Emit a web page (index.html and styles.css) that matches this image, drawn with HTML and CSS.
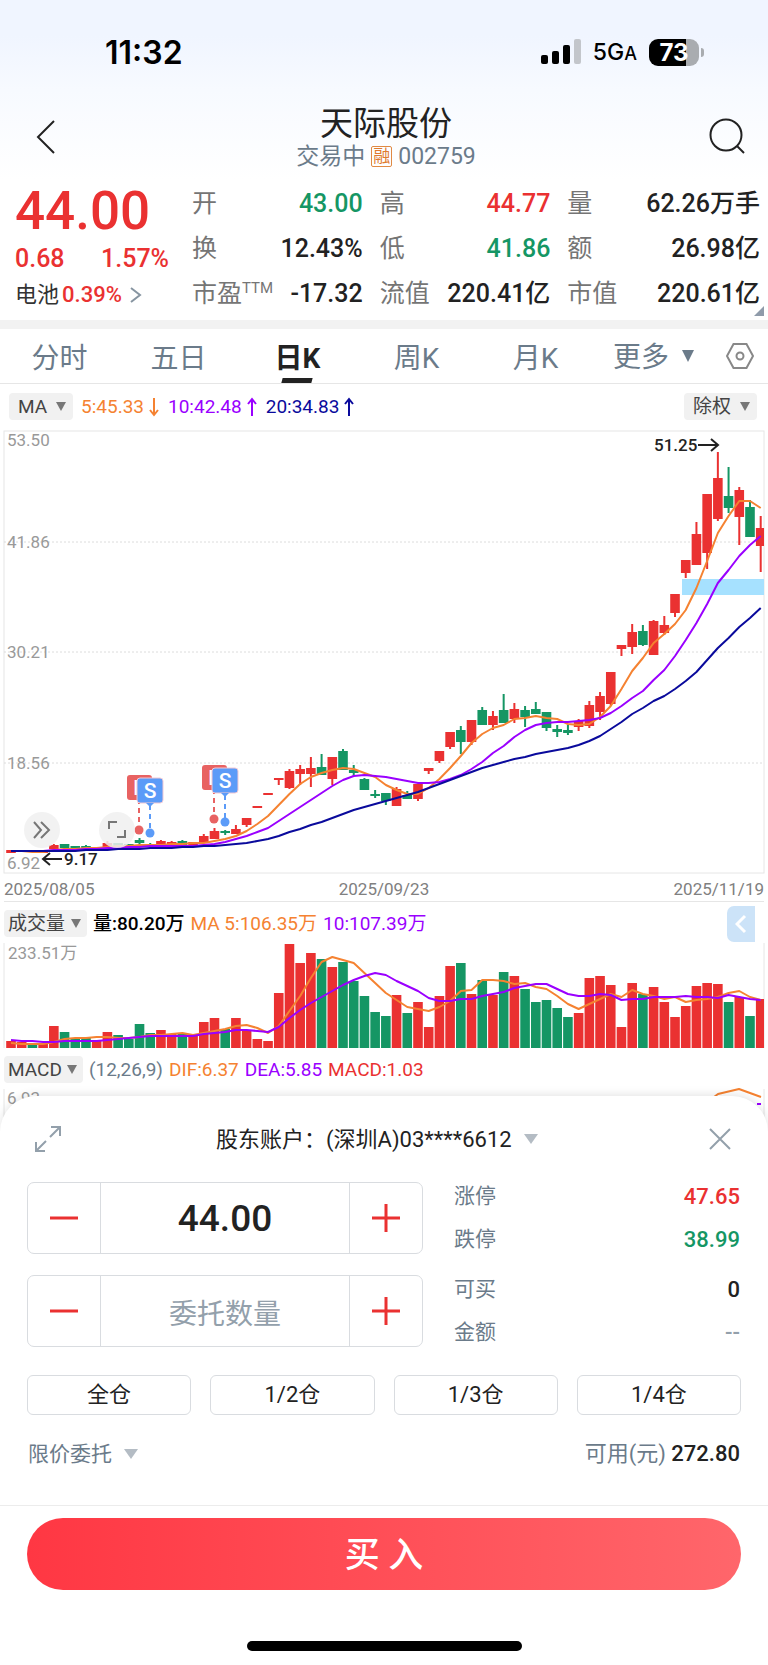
FILE: index.html
```html
<!DOCTYPE html>
<html lang="zh-CN">
<head>
    <meta charset="UTF-8" />
    <meta name="viewport" content="width=device-width, initial-scale=1.0">
    <title>天际股份 002759</title>
    <link rel="stylesheet" href="styles.css">
</head>
<body>
    <header class="top">
        <div class="status">
            <span class="time">11:32</span>
            <div class="status-right">
                <svg class="signal" width="40" height="26" viewBox="0 0 40 26">
                    <rect x="0" y="16" width="7" height="9" rx="2" />
                    <rect x="11" y="12" width="7" height="13" rx="2" />
                    <rect x="22" y="6" width="7" height="19" rx="2" />
                    <rect x="33" y="0" width="7" height="25" rx="2" fill="#c3c6cb" />
                </svg>
                <span class="network">5G<small>A</small></span>
                <span class="battery">73</span>
            </div>
        </div>
        <nav class="nav">
            <button class="icon-button" aria-label="返回">
                <svg width="20" height="36" viewBox="0 0 20 36"><path d="M18 2 L2 18 L18 34" /></svg>
            </button>
            <div class="title">
                <h1>天际股份</h1>
                <p>交易中 <span class="tag">融</span> 002759</p>
            </div>
            <button class="icon-button" aria-label="搜索">
                <svg width="38" height="38" viewBox="0 0 38 38"><circle cx="18" cy="17" r="15.500" /><path d="M29 28 L36 35" /></svg>
            </button>
        </nav>
    </header>

    <section class="quote">
        <div class="price red">
            <strong>44.00</strong>
            <p class="change"><span>0.68</span><span>1.57%</span></p>
            <a class="sector" href="#">电池<span class="red">0.39%</span>
                <svg width="12" height="18" viewBox="0 0 12 18"><path d="M1 2 L10 9 L1 16" /></svg>
            </a>
        </div>
        <dl class="stats">
            <div><dt>开</dt><dd class="green">43.00</dd></div>
            <div><dt>高</dt><dd class="red">44.77</dd></div>
            <div><dt>量</dt><dd>62.26万手</dd></div>
            <div><dt>换</dt><dd>12.43%</dd></div>
            <div><dt>低</dt><dd class="green">41.86</dd></div>
            <div><dt>额</dt><dd>26.98亿</dd></div>
            <div><dt>市盈<sup>TTM</sup></dt><dd>-17.32</dd></div>
            <div><dt>流值</dt><dd>220.41亿</dd></div>
            <div><dt>市值</dt><dd>220.61亿</dd></div>
        </dl>
        <span class="corner"></span>
    </section>

    <nav class="tabs">
        <button>分时</button>
        <button>五日</button>
        <button class="active">日K</button>
        <button>周K</button>
        <button>月K</button>
        <label class="picker"><select aria-label="更多周期"><option>更多</option></select><i class="caret"></i></label>
        <button aria-label="设置">
            <svg width="28" height="26" viewBox="0 0 28 26"><path d="M7.500 1 H20.500 L27 13 L20.500 25 H7.500 L1 13 Z" /><circle cx="14" cy="13" r="3.500" /></svg>
        </button>
    </nav>

    <div class="legend legend-main">
        <label class="picker chip"><select aria-label="主图指标"><option>MA</option></select><i class="caret"></i></label>
        <span class="orange">5:45.33<svg width="12" height="20" viewBox="0 0 12 20"><path d="M6 1 V18 M2 13 L6 18 L10 13" /></svg></span>
        <span class="purple">10:42.48<svg width="12" height="20" viewBox="0 0 12 20"><path d="M6 19 V2 M2 7 L6 2 L10 7" /></svg></span>
        <span class="navy">20:34.83<svg width="12" height="20" viewBox="0 0 12 20"><path d="M6 19 V2 M2 7 L6 2 L10 7" /></svg></span>
        <label class="picker chip right"><select aria-label="复权"><option>除权</option></select><i class="caret"></i></label>
    </div>

    <div class="chart">
        <svg id="kline" viewBox="0 0 768 443">
            <rect class="frame" x="4" y="1" width="760" height="442" />
            <path class="grid" d="M4 112 H764 M4 222 H764 M4 333 H764" />
            <rect x="682" y="149" width="82" height="16" fill="#a6e1ff" />
            <g id="candles"></g>
            <g id="averages"></g>
            <g class="axis">
                <text x="7" y="16">53.50</text>
                <text x="7" y="118">41.86</text>
                <text x="7" y="228">30.21</text>
                <text x="7" y="339">18.56</text>
                <text x="7" y="439">6.92</text>
            </g>
            <g class="peak">
                <text x="654" y="21">51.25</text>
                <path d="M698 15 H717 M711 9 L718 15 L711 21" />
                <text x="64" y="435">9.17</text>
                <path d="M62 429 H43 M50 423 L43 429 L50 435" />
            </g>
            <g id="trades"></g>
        </svg>
        <button class="round forward" aria-label="前进">
            <svg width="20" height="18" viewBox="0 0 20 18"><path d="M2 1 L9 9 L2 17 M9 1 L17 9 L9 17" /></svg>
        </button>
        <button class="round enlarge" aria-label="全屏">
            <svg width="18" height="18" viewBox="0 0 18 18"><path d="M1 8 V1 H9 M17 9 V16 H9" /></svg>
        </button>
    </div>
    <div class="dates">
        <span>2025/08/05</span>
        <span>2025/09/23</span>
        <span>2025/11/19</span>
    </div>

    <div class="legend">
        <label class="picker chip"><select aria-label="副图指标"><option>成交量</option></select><i class="caret"></i></label>
        <span class="black">量:80.20万</span>
        <span class="orange">MA 5:106.35万</span>
        <span class="purple">10:107.39万</span>
        <button class="drawer" aria-label="展开">
            <svg width="12" height="20" viewBox="0 0 12 20"><path d="M10 2 L2 10 L10 18" /></svg>
        </button>
    </div>
    <svg id="volume" viewBox="0 0 768 105">
        <path class="frame" d="M4 0 V105 M764 0 V105" />
        <g id="bars"></g>
        <g id="volumeAverages"></g>
        <g class="axis"><text x="8" y="16">233.51万</text></g>
    </svg>

    <div class="legend">
        <label class="picker chip"><select aria-label="副图指标二"><option>MACD</option></select><i class="caret"></i></label>
        <span class="slate">(12,26,9)</span>
        <span class="orange">DIF:6.37</span>
        <span class="purple">DEA:5.85</span>
        <span class="red">MACD:1.03</span>
    </div>
    <svg id="macd" viewBox="0 0 768 40">
        <path class="frame" d="M4 0 V40 M764 0 V40" />
        <path class="line" stroke="#f58231" d="M714 8 L718 5 L739 0 L750 4 L761 8" />
        <path class="line" stroke="#9a00ff" d="M757 15 H761" />
        <g class="axis"><text x="7" y="15">6.93</text></g>
    </svg>

    <form class="sheet">
        <div class="sheet-head">
            <button type="button" aria-label="放大">
                <svg width="26" height="26" viewBox="0 0 26 26"><path d="M15 11 L25 1 M16 1 H25 V10 M11 15 L1 25 M1 16 V25 H10" /></svg>
            </button>
            <label class="picker"><select aria-label="股东账户"><option>股东账户：(深圳A)03****6612</option></select><i class="caret"></i></label>
            <button type="button" aria-label="关闭">
                <svg width="22" height="22" viewBox="0 0 22 22"><path d="M1 1 L21 21 M21 1 L1 21" /></svg>
            </button>
        </div>

        <div class="order">
            <div class="stepper">
                <button type="button" aria-label="减价"><svg width="30" height="30" viewBox="0 0 30 30"><path d="M1 15 H29" /></svg></button>
                <input type="text" aria-label="委托价格" value="44.00">
                <button type="button" aria-label="加价"><svg width="30" height="30" viewBox="0 0 30 30"><path d="M1 15 H29 M15 1 V29" /></svg></button>
            </div>
            <dl class="limits">
                <div><dt>涨停</dt><dd class="red">47.65</dd></div>
                <div><dt>跌停</dt><dd class="green">38.99</dd></div>
            </dl>
            <div class="stepper">
                <button type="button" aria-label="减量"><svg width="30" height="30" viewBox="0 0 30 30"><path d="M1 15 H29" /></svg></button>
                <input type="text" aria-label="委托数量" placeholder="委托数量">
                <button type="button" aria-label="加量"><svg width="30" height="30" viewBox="0 0 30 30"><path d="M1 15 H29 M15 1 V29" /></svg></button>
            </div>
            <dl class="limits">
                <div><dt>可买</dt><dd>0</dd></div>
                <div><dt>金额</dt><dd class="muted">--</dd></div>
            </dl>
        </div>

        <div class="portions">
            <button type="button">全仓</button>
            <button type="button">1/2仓</button>
            <button type="button">1/3仓</button>
            <button type="button">1/4仓</button>
        </div>

        <div class="funds">
            <label class="picker"><select aria-label="委托方式"><option>限价委托</option></select><i class="caret"></i></label>
            <p>可用(元) <b>272.80</b></p>
        </div>

        <div class="submit">
            <button type="submit">买 入</button>
        </div>
        <div class="home"></div>
    </form>

    <script src="script.js"></script>
</body>
</html>
```

FILE: styles.css
```css
* {
    box-sizing: border-box;
}

body {
    margin: 0;
    background-color: white;
    color: #222;
    font-family: Roboto, "Noto Sans CJK SC", sans-serif;
}

h1, p, dl, dd {
    margin: 0;
}

button, input, select {
    font-family: inherit;
    color: inherit;
    background: none;
    border: none;
    padding: 0;
    margin: 0;
}

button {
    cursor: pointer;
}

svg {
    fill: none;
    stroke-width: 2;
}

.red { color: #ea3131; }
.green { color: #159664; }
.orange { color: #f58231; }
.purple { color: #9a00ff; }
.navy { color: #0a0a9c; }
.black { color: black; }
.slate { color: #6b7b8a; }

/* Cabecera */
.top {
    background: linear-gradient(#f0f5ff 20%, #f7faff 50%, white);
}

.status {
    display: flex;
    justify-content: space-between;
    align-items: center;
    height: 90px;
    padding: 14px 69px 0 105px;
    color: black;
    font-family: Inter, sans-serif;
}

.time {
    font-size: 32px;
    font-weight: 600;
}

.status-right {
    display: flex;
    align-items: center;
    gap: 12px;
}

.signal {
    fill: black;
}

.network {
    font-size: 23px;
    font-weight: 500;
}

.network small {
    font-size: 18px;
}

.battery {
    position: relative;
    width: 50px;
    height: 27px;
    border-radius: 9px;
    background: linear-gradient(90deg, black 74%, #a9acb0 74%);
    color: white;
    font-size: 24px;
    font-weight: 700;
    line-height: 27px;
    text-align: center;
}

.battery::after {
    content: "";
    position: absolute;
    right: -5px;
    top: 9px;
    width: 3px;
    height: 9px;
    border-radius: 0 4px 4px 0;
    background-color: #a9acb0;
}

.nav {
    display: grid;
    grid-template-columns: 1fr auto 1fr;
    align-items: center;
    height: 90px;
    padding: 4px 22px 0 26px;
}

.icon-button {
    display: flex;
    width: 38px;
    padding-left: 10px;
}

.icon-button:last-child {
    justify-self: end;
    padding: 0;
}

.icon-button svg {
    stroke: #222;
}

.title {
    text-align: center;
}

.title h1 {
    font-size: 33px;
    font-weight: 400;
    line-height: 38px;
}

.title p {
    display: flex;
    align-items: center;
    justify-content: center;
    gap: 6px;
    color: #6b7b8a;
    font-size: 23px;
    line-height: 27px;
}

.tag {
    width: 21px;
    height: 21px;
    border: 1px solid #e08a45;
    border-radius: 2px;
    color: #e07a2d;
    font-size: 17px;
    line-height: 19px;
    text-align: center;
}

/* Cotización */
.quote {
    display: flex;
    position: relative;
    height: 149px;
    padding: 1px 8px 0 15px;
    border-bottom: 9px solid #f2f2f2;
}

.price {
    width: 177px;
    font-weight: 500;
}

.price strong {
    display: block;
    font-size: 53px;
    font-weight: 500;
    line-height: 60px;
}

.change {
    display: flex;
    justify-content: space-between;
    width: 154px;
    font-size: 25px;
    line-height: 36px;
}

.sector {
    display: flex;
    align-items: center;
    color: #333;
    font-size: 22px;
    font-weight: 400;
    line-height: 36px;
    text-decoration: none;
}

.sector span {
    margin: 0 8px 0 3px;
    font-weight: 500;
}

.sector svg {
    stroke: #8795a1;
}

.stats {
    flex: 1;
    display: grid;
    grid-template-columns: 171fr 171fr 193fr;
    grid-auto-rows: 45px;
    column-gap: 17px;
    font-size: 25px;
    line-height: 45px;
}

.stats div, .limits div {
    display: flex;
    justify-content: space-between;
}

.stats dt {
    color: #757575;
}

.stats dd {
    font-weight: 500;
}

.stats sup {
    font-size: 15px;
    line-height: 0;
    vertical-align: 9px;
}

.corner {
    position: absolute;
    right: 4px;
    bottom: 4px;
    border-left: 10px solid transparent;
    border-bottom: 10px solid #8f9baa;
}

/* Pestañas */
.tabs {
    display: grid;
    grid-template-columns: repeat(5, 119fr) 117fr 56fr;
    align-items: center;
    height: 55px;
    border-bottom: 1px solid #e6e6e6;
    color: #6b7b8a;
    font-size: 28px;
}

.tabs button, .tabs select {
    height: 54px;
    font-size: 28px;
}

.tabs .picker {
    justify-content: center;
}

.tabs select {
    padding-top: 3px;
}

.tabs .active {
    position: relative;
    color: #222;
    font-weight: 700;
}

.active::after {
    content: "";
    position: absolute;
    left: 44px;
    bottom: 0;
    width: 30px;
    height: 5px;
    background-color: #222;
    transform: skewX(-15deg);
}

.tabs svg {
    display: block;
    margin: 0 auto;
    stroke: #888;
}

.picker {
    display: flex;
    align-items: center;
    gap: 8px;
}

.picker select {
    appearance: none;
    text-overflow: clip;
}

.caret {
    border: 5px solid transparent;
    border-top: 10px solid currentColor;
    border-bottom: none;
}

.tabs .caret {
    margin-left: 4px;
    border-width: 12px 6px 0;
}

/* Leyendas */
.legend {
    display: flex;
    align-items: center;
    gap: 6px;
    height: 41px;
    padding: 2px 4px 0;
    font-size: 19px;
    line-height: 22px;
}

.legend-main {
    height: 46px;
    gap: 8px;
    padding: 0 11px 1px 9px;
}

.legend span {
    display: flex;
    align-items: center;
    gap: 4px;
}

.legend .black {
    font-weight: 500;
}

.legend span svg {
    stroke: currentColor;
}

.chip {
    height: 27px;
    padding: 0 6px 0 4px;
    gap: 5px;
    border-radius: 4px;
    background-color: #f1f1f1;
    color: #444;
}

.legend-main .chip {
    padding: 0 7px 0 9px;
    gap: 8px;
}

.chip select {
    font-size: 19px;
}

.chip .caret {
    border-width: 9px 5px 0;
    color: #777;
}

.legend .right {
    margin-left: auto;
}

.drawer {
    display: flex;
    align-items: center;
    justify-content: center;
    width: 28px;
    height: 36px;
    margin: 0 9px 0 auto;
    border-radius: 7px 0 0 7px;
    background-color: #cce3f8;
}

.drawer svg {
    stroke: white;
    stroke-width: 3;
}

/* Gráficos */
.chart {
    position: relative;
}

#kline, #volume, #macd {
    display: block;
    width: 100%;
    overflow: visible;
}

.frame {
    stroke: #e6e6e6;
    stroke-width: 1;
}

.grid {
    stroke: #dcdcdc;
    stroke-width: 1;
    stroke-dasharray: 2 2;
}

.line {
    stroke-width: 2;
    stroke-linejoin: round;
}

.axis {
    fill: #999;
    font-size: 17px;
}

.peak {
    fill: #222;
    stroke: none;
    font-size: 17px;
    font-weight: 500;
}

.peak path {
    fill: none;
    stroke: #222;
}

.badge {
    fill: white;
    font-size: 21px;
    font-weight: 500;
    text-anchor: middle;
}

.round {
    position: absolute;
    top: 382px;
    display: flex;
    align-items: center;
    justify-content: center;
    width: 36px;
    height: 36px;
    border-radius: 50%;
    background-color: rgba(240, 240, 240, 0.85);
}

.round svg {
    stroke: #777;
}

.forward {
    left: 24px;
}

.enlarge {
    left: 99px;
}

.dates {
    display: flex;
    justify-content: space-between;
    height: 29px;
    margin: 0 4px;
    border-bottom: 1px solid #e6e6e6;
    color: #808080;
    font-size: 17px;
    line-height: 32px;
}

/* Panel de compra */
.sheet {
    position: relative;
    margin-top: -33px;
    border-radius: 36px 36px 0 0;
    background-color: white;
    box-shadow: 0 -2px 8px rgba(0, 0, 0, 0.1);
}

.sheet-head {
    display: flex;
    justify-content: space-between;
    align-items: center;
    height: 86px;
    padding: 0 37px 0 35px;
}

.sheet-head svg {
    display: block;
    stroke: #93a0ab;
}

.sheet-head .picker {
    gap: 12px;
    margin-right: 16px;
}

.sheet-head select {
    font-size: 22px;
}

.sheet .caret {
    border-width: 10px 7px 0;
    color: #b4bcc4;
}

.order {
    display: grid;
    grid-template-columns: 396fr 286fr;
    gap: 21px 31px;
    padding: 0 28px 0 27px;
}

.stepper {
    display: grid;
    grid-template-columns: 72px 1fr 72px;
    height: 72px;
    border: 1px solid #d9dce0;
    border-radius: 7px;
}

.stepper input {
    width: 100%;
    border: 1px solid #d9dce0;
    border-width: 0 1px;
    font-size: 37px;
    font-weight: 500;
    text-align: center;
}

.stepper input::placeholder {
    color: #93a0ab;
    font-size: 28px;
    font-weight: 400;
}

.stepper svg {
    display: block;
    margin: 0 auto;
    stroke: #ea3131;
    stroke-width: 3;
}

.limits {
    display: flex;
    flex-direction: column;
    justify-content: space-between;
    font-size: 22px;
    line-height: 29px;
}

.limits dt {
    color: #6b7b8a;
    font-size: 21px;
}

.limits dd {
    font-weight: 500;
}

.limits .muted {
    color: #93a0ab;
}

.portions {
    display: grid;
    grid-template-columns: repeat(4, 1fr);
    gap: 19px;
    padding: 28px 27px 0;
}

.portions button {
    height: 40px;
    border: 1px solid #d9dce0;
    border-radius: 6px;
    font-size: 22px;
    line-height: 38px;
}

.funds {
    display: flex;
    justify-content: space-between;
    align-items: center;
    height: 91px;
    padding: 0 28px 12px;
    border-bottom: 1px solid #ececec;
    color: #6b7b8a;
    font-size: 21px;
}

.funds select {
    font-size: 21px;
}

.funds .picker {
    gap: 12px;
}

.funds p {
    font-size: 22px;
    line-height: 26px;
}

.funds b {
    color: #222;
    font-weight: 500;
}

.submit {
    padding: 12px 27px 0;
}

.submit button {
    width: 100%;
    height: 72px;
    padding-bottom: 5px;
    border-radius: 36px;
    background: linear-gradient(90deg, #ff3743, #ff666b);
    color: white;
    font-size: 35px;
    font-weight: 500;
}

.home {
    width: 275px;
    height: 10px;
    margin: 51px auto 0;
    border-radius: 5px;
    background-color: black;
}

.home::after {
    content: "";
    display: block;
    height: 24px;
}
```

FILE: script.js
```js
const RED = '#ea3131';
const GREEN = '#159664';
const ORANGE = '#f58231';
const PURPLE = '#9a00ff';
const NAVY = '#0a0a9c';

// color, body top, body bottom, high, low, volume
const days = [
    ['r', 420, 423, 420, 423, 7], ['r', 421, 422, 421, 422, 6], ['g', 421, 422, 421, 422, 3],
    ['r', 421, 423, 421, 423, 4], ['r', 415, 419, 414, 419, 22], ['g', 414, 418, 414, 419, 16],
    ['g', 416, 419, 416, 419, 10], ['g', 416, 419, 415, 419, 10], ['r', 417, 419, 417, 419, 8],
    ['r', 413, 417, 411, 417, 16], ['g', 413, 416, 413, 416, 13], ['g', 414, 417, 414, 417, 9],
    ['g', 410, 413, 408, 415, 24], ['g', 414, 416, 413, 416, 15], ['r', 411, 415, 410, 415, 18],
    ['r', 412, 414, 411, 414, 14], ['g', 411, 416, 410, 416, 14], ['r', 412, 417, 412, 417, 13],
    ['r', 406, 412, 404, 412, 26], ['r', 401, 409, 398, 409, 30], ['g', 401, 403, 400, 405, 19],
    ['r', 399, 404, 395, 404, 30], ['r', 388, 395, 388, 397, 17], ['r', 376, 378, 376, 378, 9],
    ['r', 363, 365, 363, 365, 7], ['r', 348, 350, 348, 355, 55], ['r', 341, 358, 339, 359, 104],
    ['r', 339, 344, 335, 355, 85], ['r', 338, 344, 327, 357, 95], ['g', 337, 345, 324, 345, 89],
    ['r', 327, 349, 327, 355, 81], ['g', 321, 340, 319, 340, 86], ['g', 340, 343, 335, 346, 67],
    ['g', 349, 360, 348, 360, 52], ['g', 364, 366, 360, 368, 36], ['g', 363, 371, 363, 375, 32],
    ['r', 359, 376, 357, 376, 53], ['g', 365, 369, 361, 369, 35], ['r', 354, 369, 354, 371, 46],
    ['r', 338, 341, 338, 344, 21], ['r', 321, 331, 321, 333, 52], ['r', 302, 317, 302, 319, 82],
    ['g', 300, 312, 296, 324, 85], ['r', 290, 312, 290, 315, 54], ['g', 280, 295, 277, 295, 68],
    ['r', 286, 295, 281, 300, 53], ['g', 280, 293, 264, 293, 76], ['r', 279, 289, 273, 293, 72],
    ['g', 280, 287, 276, 297, 59], ['g', 279, 284, 272, 284, 46], ['g', 282, 298, 282, 301, 48],
    ['g', 299, 302, 295, 307, 40], ['g', 300, 303, 295, 305, 31], ['r', 291, 297, 289, 301, 35],
    ['r', 275, 296, 271, 298, 70], ['r', 266, 282, 262, 290, 72], ['r', 242, 274, 242, 276, 63],
    ['r', 215, 219, 215, 226, 21], ['r', 202, 217, 194, 224, 65], ['g', 201, 215, 195, 216, 54],
    ['r', 191, 225, 190, 225, 61], ['r', 195, 203, 186, 205, 46], ['r', 164, 183, 164, 187, 31],
    ['r', 130, 143, 130, 148, 42], ['r', 104, 135, 92, 135, 62], ['r', 64, 123, 64, 139, 65],
    ['r', 48, 89, 22, 91, 64], ['g', 66, 78, 37, 83, 46], ['r', 60, 87, 57, 115, 51],
    ['g', 77, 107, 70, 107, 32], ['r', 98, 116, 86, 142, 49]
];

// moving averages of the price
const ma5 = [421, 421, 422, 422, 420, 419, 419, 418, 418, 417, 416, 416, 415, 415, 415, 414, 414, 413,
    413, 411, 409, 406, 401, 394, 386, 375, 364, 354, 347, 343, 340, 338, 339, 343, 347, 355, 360, 364,
    364, 358, 349, 338, 326, 313, 304, 298, 295, 289, 288, 286, 288, 289, 294, 295, 294, 287, 276, 259,
    241, 228, 213, 204, 194, 180, 158, 131, 103, 86, 71, 71, 78];
const ma10 = [421, 421, 421, 421, 420, 420, 420, 419, 419, 418, 418, 417, 417, 416, 416, 416, 416, 416,
    415, 414, 412, 409, 406, 402, 398, 391, 384, 377, 370, 363, 356, 350, 346, 345, 346, 347, 349, 351,
    353, 353, 352, 349, 345, 339, 332, 323, 316, 307, 300, 295, 293, 292, 292, 291, 290, 288, 283, 276,
    268, 261, 250, 240, 226, 210, 193, 174, 153, 140, 126, 115, 106];
const ma20 = [421, 421, 421, 421, 421, 421, 421, 420, 420, 420, 419, 419, 419, 418, 418, 418, 417, 417,
    416, 416, 415, 414, 413, 411, 409, 406, 402, 399, 395, 392, 388, 384, 380, 377, 374, 371, 368, 365,
    362, 358, 354, 350, 346, 342, 338, 335, 332, 329, 327, 324, 322, 320, 318, 315, 311, 306, 299, 292,
    284, 278, 271, 266, 259, 251, 242, 230, 218, 208, 197, 188, 178];

// moving averages of the volume
const vol5 = [100, 101, 101, 101, 99, 96, 95, 95, 94, 94, 95, 95, 94, 92, 92, 91, 90, 92, 90, 88, 86, 83,
    82, 85, 90, 83, 68, 53, 35, 19, 14, 17, 20, 30, 40, 50, 57, 64, 66, 68, 64, 58, 48, 47, 37, 37, 38,
    41, 40, 44, 46, 53, 61, 66, 61, 56, 51, 54, 47, 51, 53, 56, 54, 59, 57, 56, 54, 50, 48, 54, 57];
const vol10 = [97, 98, 98, 99, 99, 98, 98, 98, 98, 97, 96, 95, 94, 93, 93, 93, 93, 93, 91, 90, 89, 87,
    87, 88, 89, 84, 75, 67, 60, 54, 48, 42, 37, 33, 30, 32, 38, 43, 48, 55, 58, 58, 56, 56, 53, 51, 49,
    45, 43, 41, 41, 46, 51, 53, 53, 51, 52, 57, 56, 56, 54, 54, 54, 53, 54, 54, 55, 52, 54, 56, 57];

// buy and sell marks: x, badge y, dot y
const trades = [[139, 345, 400], [214, 335, 389]];

function xOf(i) {
    return 11 + i * 10.71;
}

function rect(x, y, width, height, color) {
    return `<rect x="${x}" y="${y}" width="${width}" height="${height}" fill="${color}" />`;
}

function line(values, color) {
    const points = values.map((y, i) => `${xOf(i)},${y}`).join(' ');
    return `<polyline class="line" points="${points}" stroke="${color}" />`;
}

function drawCandles() {
    let candles = '';
    let bars = '';
    days.forEach(([type, top, bottom, high, low, volume], i) => {
        const color = type === 'r' ? RED : GREEN;
        const x = xOf(i);
        const width = Math.min(9.6, 764 - x + 4.8);
        candles += rect(x - 1, high, 2, low - high, color);
        candles += rect(x - 4.8, top, width, bottom - top, color);
        bars += rect(x - 4.8, 105 - volume, width, volume, color);
    });
    document.getElementById('candles').innerHTML = candles;
    document.getElementById('bars').innerHTML = bars;
}

function drawTrades() {
    document.getElementById('trades').innerHTML = trades.map(([x, y, dot]) => `
        <path d="M${x} ${y + 24} V${dot}" stroke="#e86262" stroke-dasharray="5 4" />
        <path d="M${x + 11} ${y + 30} V${dot}" stroke="#5b9bf8" stroke-dasharray="5 4" />
        <circle cx="${x}" cy="${dot}" r="4.5" fill="#e86262" />
        <circle cx="${x + 11}" cy="${dot + 3}" r="4.5" fill="#5b9bf8" />
        <rect x="${x - 12}" y="${y}" width="25" height="25" rx="3" fill="#e86262" />
        <text class="badge" x="${x + 1}" y="${y + 20}">B</text>
        <rect x="${x - 2}" y="${y + 3}" width="26" height="25" rx="3" fill="#5b9bf8" stroke="#f3c9d4" stroke-width="1" />
        <path d="M${x + 7} ${y + 28} H${x + 15} L${x + 11} ${y + 32} Z" fill="#5b9bf8" />
        <text class="badge" x="${x + 11}" y="${y + 23}">S</text>`).join('');
}

drawCandles();
drawTrades();
document.getElementById('averages').innerHTML = line(ma5, ORANGE) + line(ma10, PURPLE) + line(ma20, NAVY);
document.getElementById('volumeAverages').innerHTML = line(vol5, ORANGE) + line(vol10, PURPLE);
```
